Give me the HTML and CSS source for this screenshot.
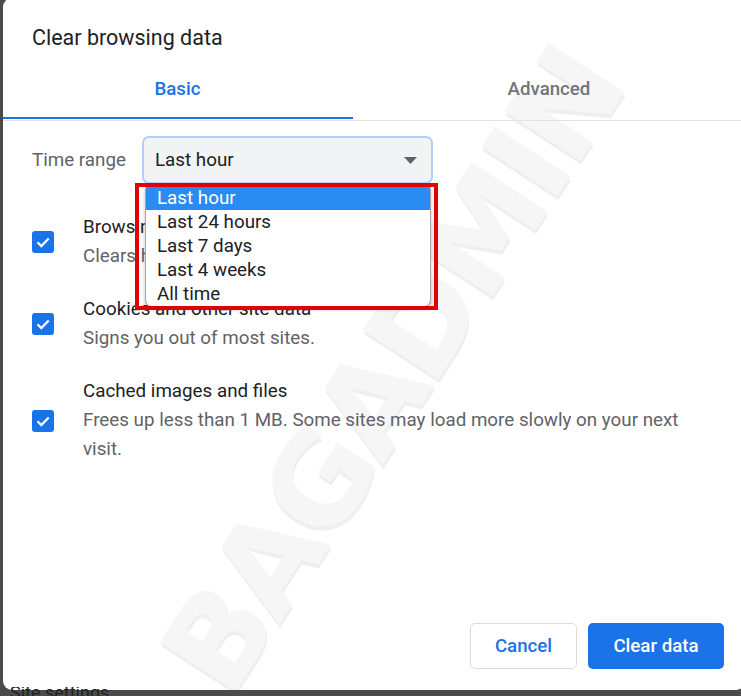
FILE: index.html
```html
<!DOCTYPE html>
<html lang="en">
<head>
<meta charset="utf-8">
<title>Clear browsing data</title>
<link rel="stylesheet" href="styles.css">
</head>
<body>
<div class="dialog">
  <div class="watermark">BAGADMIN</div>
  <h1 class="title">Clear browsing data</h1>
  <div class="tabs">
    <div class="tab active">Basic</div>
    <div class="tab">Advanced</div>
  </div>
  <div class="range-row">
    <span class="range-label">Time range</span>
    <div class="select">
      <span class="select-value">Last hour</span>
      <svg class="select-arrow" width="13" height="7" viewBox="0 0 13 7"><path d="M0 0h13L6.5 7z" fill="#5f6368"/></svg>
    </div>
  </div>
  <div class="options">
    <div class="option">
      <span class="checkbox"><svg width="22" height="22" viewBox="0 0 22 22"><path d="M5.5 11.3l3.8 3.8 7.4-7.6" fill="none" stroke="#fff" stroke-width="2.2"/></svg></span>
      <div class="option-text">
        <div class="option-title">Browsing history</div>
        <div class="option-sub">Clears history.</div>
      </div>
    </div>
    <div class="option">
      <span class="checkbox"><svg width="22" height="22" viewBox="0 0 22 22"><path d="M5.5 11.3l3.8 3.8 7.4-7.6" fill="none" stroke="#fff" stroke-width="2.2"/></svg></span>
      <div class="option-text">
        <div class="option-title">Cookies and other site data</div>
        <div class="option-sub">Signs you out of most sites.</div>
      </div>
    </div>
    <div class="option">
      <span class="checkbox"><svg width="22" height="22" viewBox="0 0 22 22"><path d="M5.5 11.3l3.8 3.8 7.4-7.6" fill="none" stroke="#fff" stroke-width="2.2"/></svg></span>
      <div class="option-text">
        <div class="option-title">Cached images and files</div>
        <div class="option-sub">Frees up less than 1 MB. Some sites may load more slowly on your next visit.</div>
      </div>
    </div>
  </div>
  <div class="actions">
    <button class="btn btn-cancel">Cancel</button>
    <button class="btn btn-primary">Clear data</button>
  </div>
  <ul class="popup">
    <li class="popup-item selected">Last hour</li>
    <li class="popup-item">Last 24 hours</li>
    <li class="popup-item">Last 7 days</li>
    <li class="popup-item">Last 4 weeks</li>
    <li class="popup-item">All time</li>
  </ul>
  <div class="highlight"></div>
</div>
<div class="under">Site settings</div>
</body>
</html>
```
FILE: styles.css
```css
html, body {
  margin: 0;
  padding: 0;
}
body {
  background: #4b4b4b;
  width: 741px;
  height: 696px;
  overflow: hidden;
  position: relative;
  font-family: Roboto, "Liberation Sans", Arial, sans-serif;
}
.dialog {
  position: relative;
  margin-left: 3px;
  margin-top: -2px;
  width: 742px;
  height: 692px;
  background: #fff;
  border-radius: 9px;
  overflow: hidden;
  display: flex;
  flex-direction: column;
  z-index: 1;
}
.watermark {
  position: absolute;
  left: 10px;
  top: 300px;
  width: 760px;
  text-align: center;
  font-family: "DejaVu Sans", sans-serif;
  font-weight: 900;
  font-size: 124px;
  letter-spacing: -4px;
  color: #f6f6f6;
  text-shadow: -3px 3px 0 #efefef;
  transform: rotate(-57deg);
  z-index: 0;
  pointer-events: none;
}
.title {
  position: relative;
  margin: 26px 0 0 29px;
  font-size: 21.5px;
  line-height: 28px;
  font-weight: 400;
  color: #202124;
}
.tabs {
  position: relative;
  display: flex;
  margin-top: 10px;
  margin-left: -1px;
  padding-bottom: 1px;
  border-bottom: 1px solid #e3e3e3;
}
.tab {
  flex: 0 0 351px;
  height: 57px;
  display: flex;
  align-items: center;
  justify-content: center;
  padding-bottom: 3px;
  box-sizing: border-box;
  font-size: 18.7px;
  font-weight: 500;
  color: #70757a;
}
.tab + .tab {
  flex: 1;
}
.tab.active {
  color: #1a73e8;
  box-shadow: inset 0 -2px 0 #1a73e8;
}
.range-row {
  position: relative;
  display: flex;
  align-items: center;
  margin: 15px 0 0 29px;
}
.range-label {
  width: 110px;
  font-size: 18.8px;
  color: #5f6368;
}
.select {
  width: 291px;
  height: 48px;
  box-sizing: border-box;
  border: 2px solid #b4cef6;
  border-radius: 7px;
  background: #f1f3f4;
  display: flex;
  align-items: center;
  justify-content: space-between;
  padding: 0 14px 0 11px;
}
.select-value {
  font-size: 18.8px;
  color: #202124;
}
.options {
  position: relative;
  margin: 29px 0 0 29px;
  display: flex;
  flex-direction: column;
  gap: 24px;
}
.option {
  display: flex;
  align-items: center;
}
.checkbox {
  width: 22px;
  height: 22px;
  border-radius: 3px;
  background: #1a73e8;
  flex: none;
  display: flex;
}
.option-text {
  margin-left: 29px;
  width: 620px;
  font-size: 18.8px;
  line-height: 29px;
}
.option-title {
  color: #202124;
}
.option-sub {
  color: #5f6368;
}
.actions {
  position: relative;
  margin-top: auto;
  margin-bottom: 21px;
  padding-right: 21px;
  display: flex;
  justify-content: flex-end;
  gap: 11px;
}
.btn {
  height: 46px;
  border-radius: 5px;
  font-family: Roboto, "Liberation Sans", Arial, sans-serif;
  font-size: 18.7px;
  font-weight: 500;
  cursor: pointer;
}
.btn-cancel {
  width: 107px;
  background: #fff;
  border: 1px solid #dadce0;
  color: #1a73e8;
}
.btn-primary {
  width: 136px;
  background: #1a73e8;
  border: none;
  color: #fff;
}
.popup {
  position: absolute;
  left: 142px;
  top: 188px;
  width: 284px;
  margin: 0;
  padding: 0;
  list-style: none;
  background: #fff;
  border: 1px solid #a9a9a9;
  border-top: none;
  border-radius: 3px 3px 7px 7px;
  box-shadow: 0 2px 4px rgba(0,0,0,0.25);
  overflow: hidden;
  z-index: 2;
}
.popup-item {
  height: 24px;
  line-height: 24px;
  padding-left: 11px;
  font-size: 18.8px;
  color: #202124;
}
.popup-item.selected {
  background: #2a8bf2;
  color: #fff;
}
.highlight {
  position: absolute;
  left: 132px;
  top: 185px;
  width: 303px;
  height: 127px;
  box-sizing: border-box;
  border: 4px solid #e30000;
  z-index: 3;
}
.under {
  position: absolute;
  left: 10px;
  top: 682px;
  font-size: 18px;
  color: #222;
  z-index: 2;
  clip-path: inset(5px 0 0 0);
}
```
